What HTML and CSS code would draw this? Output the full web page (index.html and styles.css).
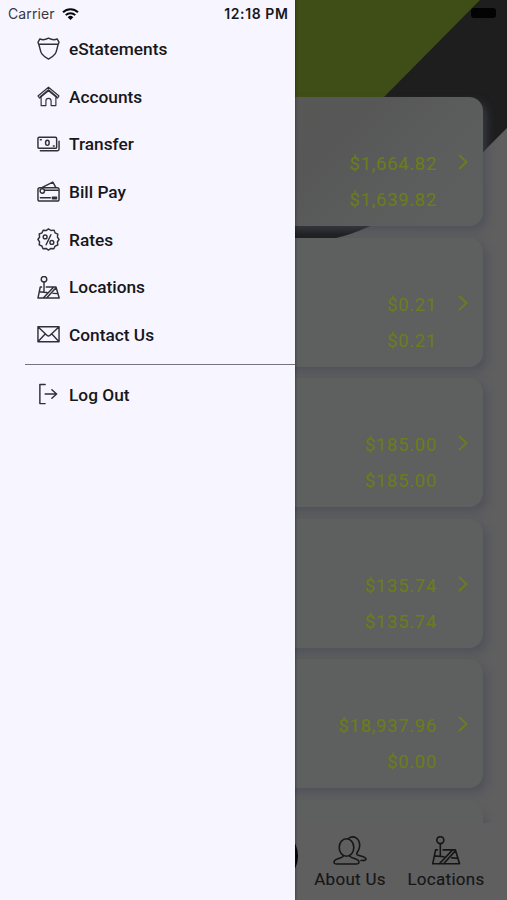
FILE: index.html
```html
<!DOCTYPE html>
<html lang="en">
<head>
<meta charset="utf-8">
<title>Accounts</title>
<link rel="stylesheet" href="styles.css">
</head>
<body>
<svg class="symbols" aria-hidden="true">
  <symbol id="map" viewBox="0 0 24 24"><circle cx="7.3" cy="3.4" r="2.9"/><path d="M7.3 6.3V16M4.8 11.5H3.4L1 23h22.2l-3.4-11.5H9.6M2.3 16.4l8 .8M16.8 18.1l5 .3M6.5 23l11-11.5M10 23l9.6-10.5"/></symbol>
  <symbol id="chevron" viewBox="0 0 10 16"><path d="M1 1l7.5 7L1 15"/></symbol>
</svg>
<div class="screen">
  <svg class="backdrop" viewBox="0 0 507 900">
    <path fill="#1e1e1f" d="M200 0H507V128L488 147C450 188 420 205 368 227Q350 235 336 238H200Z"/>
    <path fill="#3f4e17" d="M200 0H480L384 97L290 187H200Z"/>
  </svg>
  <main class="accounts">
    <section class="card first"><div class="amounts"><span>$1,664.82</span><span>$1,639.82</span></div><svg class="chevron"><use href="#chevron"/></svg></section>
    <section class="card"><div class="amounts"><span>$0.21</span><span>$0.21</span></div><svg class="chevron"><use href="#chevron"/></svg></section>
    <section class="card"><div class="amounts"><span>$185.00</span><span>$185.00</span></div><svg class="chevron"><use href="#chevron"/></svg></section>
    <section class="card"><div class="amounts"><span>$135.74</span><span>$135.74</span></div><svg class="chevron"><use href="#chevron"/></svg></section>
    <section class="card"><div class="amounts"><span>$18,937.96</span><span>$0.00</span></div><svg class="chevron"><use href="#chevron"/></svg></section>
    <section class="card"></section>
  </main>
  <nav class="tabs">
    <span class="fab"></span>
    <div class="tab about">
      <svg viewBox="0 0 34 29"><ellipse cx="13.5" cy="11.5" rx="7.3" ry="8.8"/><path d="M10.5 19.5c0 3-9.5 2.5-9.5 6.5 0 2 1 2 3 2h19c2 0 3 0 3-2 0-4-9.500-3.500-9.500-6.500M15.500 2.500C18 .5 21 .6 23.500 2.200c3.500 2.500 4 7.800 2 12-1 2-2 2.300-1.600 4 .6 2 9.100 1.800 9.100 4.800 0 1.500-1 1.500-5 1.500"/></svg>
      <span>About Us</span>
    </div>
    <div class="tab places">
      <svg><use href="#map"/></svg>
      <span>Locations</span>
    </div>
  </nav>
  <span class="battery"></span>
  <aside class="drawer">
    <header class="status">
      <span class="carrier">Carrier</span>
      <svg class="wifi" viewBox="0 0 17 12"><path d="M1 4.300a10.700 10.700 0 0 1 15 0M3.700 7.100a6.900 6.900 0 0 1 9.600 0"/><path class="solid" d="M8.500 12L5.700 9.200a4 4 0 0 1 5.600 0z"/></svg>
      <span class="time">12:18 PM</span>
    </header>
    <ul class="menu">
      <li><svg viewBox="0 0 24 24"><path d="M3 2Q7 4 12 1.200Q17 4 21 2L23 5.500C19 14 23 17 12 23C1 17 5 14 1 5.500ZM2 7.500H22"/></svg><span>eStatements</span></li>
      <li><svg class="thin" viewBox="0 0 24 24"><path d="M1 11.500L12 2.300L23 11.500L21.300 13.700L12 6L2.700 13.700ZM4.300 12.500V21.500H9.300V16.500Q9.300 14 12 14T14.700 16.500V21.500H19.700V12.500M3.300 12.300L12 5L20.700 12.300"/></svg><span>Accounts</span></li>
      <li><svg viewBox="0 0 24 24"><rect x="1" y="4.500" width="19.500" height="11.500" rx="1.200"/><ellipse cx="10.800" cy="10.200" rx="1.900" ry="2.700"/><path d="M3.500 18.500H21.500Q23 18.500 23 17V8.500M3.500 7h1M17 13.500h1"/></svg><span>Transfer</span></li>
      <li><svg viewBox="0 0 24 24"><rect x="1" y="8" width="22" height="14" rx="2"/><circle cx="5.500" cy="11.500" r="2.300"/><path d="M6 7.500L16.500 2.200L19.500 7.500M8 10.700H22M3.500 18.500H14M16 18h4.500M16 19.500h4.500"/></svg><span>Bill Pay</span></li>
      <li><svg viewBox="0 0 24 24"><path d="M12 1L14.600 2.600L17.700 2.200L18.800 5L21.700 6.400L21.300 9.500L23 12L21.300 14.600L21.700 17.700L18.800 18.900L17.600 21.700L14.500 21.300L12 23L9.400 21.300L6.300 21.700L5.100 18.800L2.300 17.600L2.700 14.500L1 12L2.700 9.400L2.300 6.300L5.200 5.100L6.400 2.300L9.500 2.700Z"/><circle cx="8.500" cy="9.300" r="2"/><circle cx="15.500" cy="15" r="2"/><path d="M14.500 7L9.500 17.500"/></svg><span>Rates</span></li>
      <li><svg><use href="#map"/></svg><span>Locations</span></li>
      <li><svg viewBox="0 0 24 24"><path d="M1 4H23V19.500H1ZM1.500 4.500L9.500 12Q12 15 14.500 12L22.500 4.500M1.500 19L8.500 11.500M22.500 19L15.500 11.500"/></svg><span>Contact Us</span></li>
    </ul>
    <div class="logout"><svg viewBox="0 0 24 24"><path d="M8.500 1.500H3V21.500H8.500M8.500 11.500H20.500M15.500 7L20.500 11.500L15.500 16"/></svg><span>Log Out</span></div>
  </aside>
</div>
</body>
</html>
```
FILE: styles.css
```css
* { box-sizing: border-box; }
body { margin: 0; font-family: Roboto, "Liberation Sans", sans-serif; }
.symbols { position: absolute; width: 0; height: 0; }
svg { fill: none; stroke: currentColor; stroke-linejoin: round; stroke-linecap: round; }
.screen { position: relative; width: 507px; height: 900px; overflow: hidden; background: #5f5f60; display: flex; flex-direction: column; }
.backdrop { position: absolute; inset: 0; width: 507px; height: 900px; stroke: none; }
.accounts { position: relative; height: 823px; padding: 97px 24px 0 20px; overflow: hidden; display: flex; flex-direction: column; gap: 11.600px; }
.card { flex: 0 0 129px; display: flex; justify-content: flex-end; padding: 49px 15px 0 0; border-radius: 14px; background: #5e5f5f; box-shadow: 4px 5px 9px rgba(72, 74, 86, .6); color: #6a7c20; }
.card.first { background: linear-gradient(135deg, #5b5b56 0%, #575757 60%, #5c5d5d 82%, #5d5e5e 100%); }
.card:last-child { box-shadow: 4px 12px 9px rgba(72, 74, 86, .6); }
.amounts { display: flex; flex-direction: column; align-items: flex-end; font-size: 18.500px; line-height: 36px; letter-spacing: .68px; margin-right: 21px; -webkit-text-stroke: .2px currentColor; }
.chevron { width: 10px; height: 16px; margin-top: 8px; stroke-width: 2; stroke-linecap: butt; }
.tabs { position: relative; height: 77px; display: flex; padding-left: 302px; color: #161617; }
.fab { position: absolute; left: 240px; top: 4px; width: 58px; height: 58px; border-radius: 50%; background: #050506; }
.tab { width: 96px; display: flex; flex-direction: column; align-items: center; padding-top: 13px; font-size: 17px; letter-spacing: .3px; white-space: nowrap; -webkit-text-stroke: .15px currentColor; }
.tab svg { width: 34px; height: 29px; stroke-width: 1.600; }
.places svg { stroke-width: 1.350; }
.tab span { line-height: 20px; margin-top: 4px; }
.battery { position: absolute; left: 471px; top: 8px; width: 25px; height: 10px; border-radius: 3px; background: #030303; }
.drawer { position: absolute; left: 0; top: 0; width: 294.500px; height: 900px; background: #f7f5ff; color: #17171b; box-shadow: 0 0 3px rgba(0, 0, 0, .5); }
.status { height: 25px; display: flex; align-items: center; padding: 2px 6px 0 8px; font-family: Inter, sans-serif; font-size: 14px; }
.carrier { color: #39383e; letter-spacing: .1px; }
.wifi { width: 17px; height: 12px; margin-left: 7px; stroke-width: 2; stroke-linecap: butt; color: #08080a; }
.wifi .solid { fill: currentColor; stroke: none; }
.time { margin-left: auto; font-weight: 600; letter-spacing: .6px; }
.menu { list-style: none; margin: 0; padding: 0; height: 339px; }
.menu li, .logout { display: flex; align-items: center; height: 47.700px; padding-left: 37px; font-size: 17.300px; font-weight: 500; letter-spacing: 0; }
.menu svg, .logout svg { width: 23px; height: 23px; stroke-width: 1.500; margin-right: 9px; color: #303036; }
.menu svg.thin { stroke-width: 1.200; }
.logout { margin-left: 25px; padding-left: 12px; height: 60px; border-top: 1px solid #77757c; }
```
